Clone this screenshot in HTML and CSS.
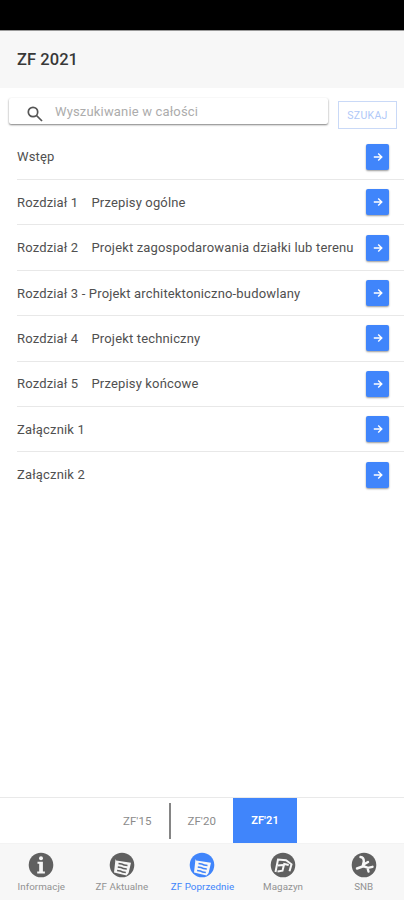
FILE: index.html
```html
<!DOCTYPE html>
<html lang="pl">
<head>
<meta charset="utf-8">
<title>ZF 2021</title>
<link rel="stylesheet" href="styles.css">
</head>
<body>
<svg class="defs" width="0" height="0" aria-hidden="true">
  <symbol id="arrow" viewBox="0 0 10 10"><path d="M.8 5h8M5.200 1.400 8.800 5 5.200 8.600" fill="none" stroke="currentColor" stroke-width="1.400"/></symbol>
  <symbol id="doc" viewBox="0 0 26 26"><circle cx="13" cy="13" r="12.300" fill="currentColor"/><path d="m6.500 7 .7 1.500 14.800 2.300-2.400 10.200-2 2.600L5 20.500Z" fill="#f7f7f7"/><path d="m9.500 11.500 3 .4q2 1.500 6 1.600M8.800 15l3 .4q2 1.500 6 1.600M8.100 18.500l3 .4q2 1.500 5.700 1.600" fill="none" stroke="currentColor" stroke-width="1.600"/></symbol>
</svg>
<div class="status"></div>
<header class="header"><h1>ZF 2021</h1></header>
<main class="content">
  <div class="search">
    <label class="field">
      <svg class="lens" viewBox="0 0 16 16"><circle cx="6" cy="6" r="4.700"/><path d="m9.500 9.500 5.500 5.500"/></svg>
      <span>Wyszukiwanie w całości</span>
    </label>
    <button class="find">SZUKAJ</button>
  </div>
  <ul class="list">
    <li><span>Wstęp</span><button class="go"><svg><use href="#arrow"/></svg></button></li>
    <li><span class="num">Rozdział 1</span><span>Przepisy ogólne</span><button class="go"><svg><use href="#arrow"/></svg></button></li>
    <li><span class="num">Rozdział 2</span><span>Projekt zagospodarowania działki lub terenu</span><button class="go"><svg><use href="#arrow"/></svg></button></li>
    <li><span>Rozdział 3 - Projekt architektoniczno-budowlany</span><button class="go"><svg><use href="#arrow"/></svg></button></li>
    <li><span class="num">Rozdział 4</span><span>Projekt techniczny</span><button class="go"><svg><use href="#arrow"/></svg></button></li>
    <li><span class="num">Rozdział 5</span><span>Przepisy końcowe</span><button class="go"><svg><use href="#arrow"/></svg></button></li>
    <li><span>Załącznik 1</span><button class="go"><svg><use href="#arrow"/></svg></button></li>
    <li><span>Załącznik 2</span><button class="go"><svg><use href="#arrow"/></svg></button></li>
  </ul>
</main>
<div class="years">
  <span class="year">ZF'15</span><i class="rule"></i><span class="year">ZF'20</span><span class="year current">ZF'21</span>
</div>
<nav class="tabs">
  <a><svg viewBox="0 0 26 26"><circle cx="13" cy="13" r="12.300" fill="currentColor"/><circle cx="13" cy="6.300" r="2" fill="#f7f7f7"/><path d="M9.500 9.800h5.400v9.700h2v2H9.200v-2h2v-7.700H9.500Z" fill="#f7f7f7"/></svg><span>Informacje</span></a>
  <a><svg><use href="#doc"/></svg><span>ZF Aktualne</span></a>
  <a class="active"><svg><use href="#doc"/></svg><span>ZF Poprzednie</span></a>
  <a><svg viewBox="0 0 26 26"><circle cx="13" cy="13" r="12.300" fill="currentColor"/><path d="M5.500 20 8 7.500l8 .8 5.500 4-2 7M8 13.500l5-.5M7.500 19.500l5-.8 1.700-6.700 4.500 1" fill="none" stroke="#f7f7f7" stroke-width="2"/></svg><span>Magazyn</span></a>
  <a><svg viewBox="0 0 26 26"><circle cx="13" cy="13" r="12.300" fill="currentColor"/><path d="M9.500 5q3.500.3 3.300 4.500l-1.200 5-5.600 2M12 14l5 1.800 4.500-1M16.500 16l1 3.500M13 12.300l4-2.300" fill="none" stroke="#f7f7f7" stroke-width="2.400" stroke-linecap="round"/></svg><span>SNB</span></a>
</nav>
</body>
</html>
```
FILE: styles.css
```css
* { box-sizing: border-box; }
body {
  margin: 0;
  height: 900px;
  display: flex;
  flex-direction: column;
  background: #fff;
  color: #505050;
  font-family: Roboto, sans-serif;
  overflow: hidden;
}
.defs { position: absolute; }
button { font-family: inherit; padding: 0; }
.status { height: 31px; background: #000; border-bottom: 1px solid #999; }
.header {
  height: 57px;
  padding-left: 17px;
  display: flex;
  align-items: center;
  background: #f7f7f7;
}
h1 { margin: 0; font-size: 16.5px; font-weight: 500; color: #383838; letter-spacing: .05px; }
.content { flex: 1; }
.search {
  height: 46.7px;
  padding: 10px 7px 0 9px;
  display: flex;
  justify-content: space-between;
}
.field {
  width: 319px;
  height: 26px;
  padding-left: 18px;
  display: flex;
  align-items: center;
  border-radius: 2px;
  box-shadow: 0 1px 2px rgba(0, 0, 0, .5);
  font-size: 13px;
  letter-spacing: .16px;
  color: #acacac;
}
.lens {
  width: 16px;
  height: 16px;
  margin: 5px 12px 0 0;
  fill: none;
  stroke: #555;
  stroke-width: 1.7;
}
.find {
  width: 59px;
  height: 28px;
  margin-top: 3px;
  border: 1px solid #c9d9f7;
  background: #fff;
  color: #afc8f8;
  font-size: 10.5px;
  letter-spacing: .3px;
}
.list { list-style: none; margin: 0; padding: 0; }
.list li {
  height: 45.4px;
  margin-left: 17px;
  padding-right: 15px;
  display: flex;
  align-items: center;
  border-bottom: 1px solid #e8e8e8;
  font-size: 13px;
  letter-spacing: .16px;
  white-space: nowrap;
}
.list li:last-child { border-bottom-color: transparent; }
.num { width: 74.5px; }
.go {
  width: 23px;
  height: 26px;
  margin-left: auto;
  display: grid;
  place-items: center;
  border: 0;
  border-radius: 2px;
  background: #4085fb;
  color: #fff;
  box-shadow: 0 1px 2px rgba(0, 0, 0, .4);
}
.go svg { width: 10px; height: 10px; }
.years {
  height: 46px;
  padding: 0 107px 0 106px;
  display: flex;
  align-items: center;
  border-top: 1px solid #e9e9e9;
  font-size: 11.5px;
  color: #8b8b8b;
}
.year { width: 62.5px; flex: none; text-align: center; letter-spacing: .1px; }
.rule { width: 2px; height: 36px; flex: none; background: #858585; }
.year.current {
  width: 64px;
  height: 45px;
  line-height: 45px;
  margin-left: auto;
  background: #4085fb;
  color: #fff;
  font-size: 11px;
  font-weight: 600;
}
.tabs {
  height: 57px;
  padding: 9px 0 0 1px;
  display: grid;
  grid-template-columns: repeat(5, 1fr);
  background: #f7f7f7;
  border-top: 1px solid #f3f3f3;
}
.tabs a {
  display: flex;
  flex-direction: column;
  align-items: center;
  gap: 3px;
  font-size: 9.8px;
  line-height: 12px;
  letter-spacing: .05px;
  white-space: nowrap;
  color: #606060;
}
.tabs span { color: #929292; }
.tabs svg { width: 26px; height: 26px; flex: none; margin-top: -1px; }
.tabs .active, .tabs .active span { color: #4085fb; }
```
